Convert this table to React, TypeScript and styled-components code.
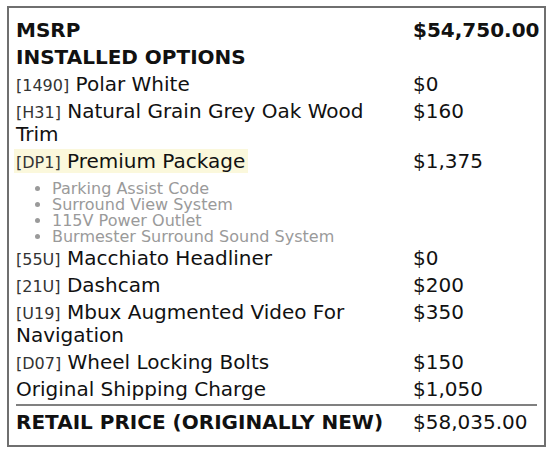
import React from 'react';
import styled, { createGlobalStyle } from 'styled-components';

interface Item {
  code?: string;
  name: string;
  price: string;
  highlight?: boolean;
  features?: string[];
}

const items: Item[] = [
  { code: '1490', name: 'Polar White', price: '$0' },
  { code: 'H31', name: 'Natural Grain Grey Oak Wood Trim', price: '$160' },
  {
    code: 'DP1',
    name: 'Premium Package',
    price: '$1,375',
    highlight: true,
    features: ['Parking Assist Code', 'Surround View System', '115V Power Outlet', 'Burmester Surround Sound System'],
  },
  { code: '55U', name: 'Macchiato Headliner', price: '$0' },
  { code: '21U', name: 'Dashcam', price: '$200' },
  { code: 'U19', name: 'Mbux Augmented Video For Navigation', price: '$350' },
  { code: 'D07', name: 'Wheel Locking Bolts', price: '$150' },
  { name: 'Original Shipping Charge', price: '$1,050' },
];

export default function App() {
  return (
    <>
      <GlobalStyle />
      <Sticker>
        <Row>
          <Label bold>MSRP</Label>
          <Price bold>$54,750.00</Price>
        </Row>
        <Row>
          <Label bold>INSTALLED OPTIONS</Label>
        </Row>
        {items.map((item) => (
          <Row key={item.name}>
            <Label>
              <Name highlight={item.highlight}>
                {item.code && <Code>[{item.code}]</Code>} {item.name}
              </Name>
              {item.features && (
                <Features>
                  {item.features.map((f) => (
                    <li key={f}>{f}</li>
                  ))}
                </Features>
              )}
            </Label>
            <Price>{item.price}</Price>
          </Row>
        ))}
        <Divider />
        <Row>
          <Label bold>RETAIL PRICE (ORIGINALLY NEW)</Label>
          <Price>$58,035.00</Price>
        </Row>
      </Sticker>
    </>
  );
}

const GlobalStyle = createGlobalStyle`
  body {
    margin: 0;
    background: #fff;
    font-family: "DejaVu Sans", sans-serif;
    color: #111;
  }
`;

const Sticker = styled.div`
  box-sizing: border-box;
  margin: 6px 0 0 7px;
  width: 539px;
  height: 441px;
  border: 2px solid #6f6f6f;
  padding: 9px 7px 0 7px;
`;

const Row = styled.div`
  display: grid;
  grid-template-columns: 385px 1fr;
  column-gap: 12px;
  padding: 2px 0;
  line-height: 23px;
  font-size: 20px;
`;

const Label = styled.div<{ bold?: boolean }>`
  font-weight: ${(p) => (p.bold ? 700 : 400)};
`;

const Name = styled.span<{ highlight?: boolean }>`
  background: ${(p) => (p.highlight ? '#fbf8dc' : 'transparent')};
  padding: 0 ${(p) => (p.highlight ? '3px' : '0')} 0 ${(p) => (p.highlight ? '2px' : '0')};
  margin-left: ${(p) => (p.highlight ? '-2px' : '0')};
`;

const Code = styled.span`
  font-size: 16px;
  line-height: 1;
  color: #333;
`;

const Price = styled.div<{ bold?: boolean }>`
  font-weight: ${(p) => (p.bold ? 700 : 400)};
`;

const Features = styled.ul`
  margin: 8px 0 -2px 0;
  padding-left: 36px;
  font-size: 16px;
  line-height: 16px;
  color: #9a9a9a;
`;

const Divider = styled.div`
  height: 2px;
  background: #808080;
  margin: 1px 0 3px 0;
`;
